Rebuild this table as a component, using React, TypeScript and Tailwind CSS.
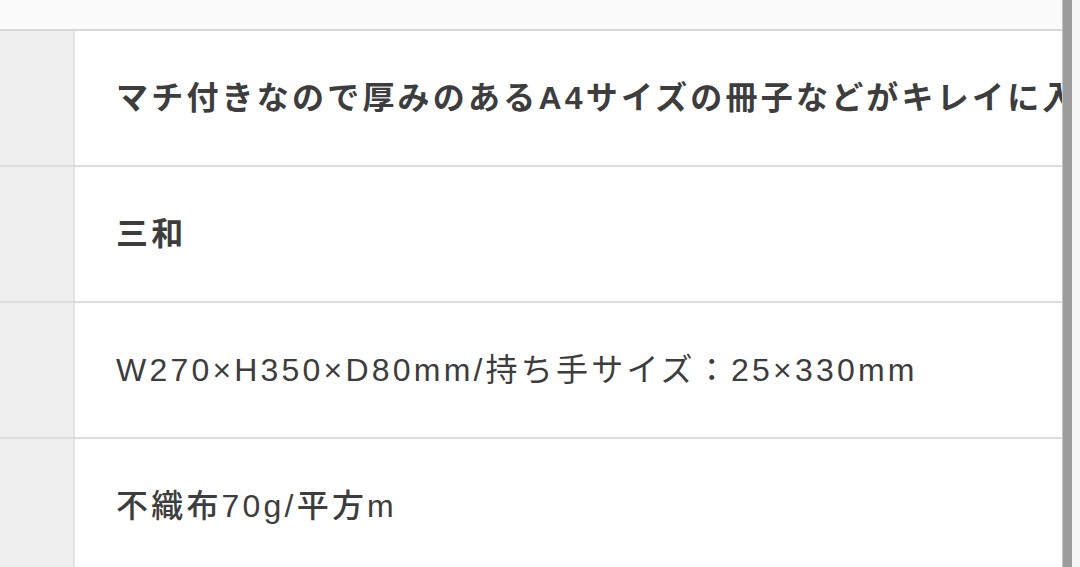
const rows = [
  {
    text: "マチ付きなので厚みのあるA4サイズの冊子などがキレイに入ります",
    weight: "font-bold",
  },
  { text: "三和", weight: "font-bold" },
  {
    text: "W270×H350×D80mm/持ち手サイズ：25×330mm",
    weight: "font-normal",
  },
  { text: "不織布70g/平方m", weight: "font-medium" },
];

export default function App() {
  return (
    <div
      className="flex h-[567px] w-[1080px] overflow-hidden bg-white"
      style={{ fontFamily: '"Liberation Sans", "Noto Sans CJK JP", sans-serif' }}
    >
      {/* Spec table */}
      <div className="flex min-w-0 flex-1 flex-col">
        <div className="h-[31px] shrink-0 border-b-2 border-[#d8d8d8] bg-[#fbfbfb]" />
        {rows.map((row, i) => (
          <div
            key={i}
            className="flex h-[136px] shrink-0 border-b-2 border-[#dddddd]"
          >
            <div className="w-[75px] shrink-0 border-r-2 border-[#e4e4e4] bg-[#efefef]" />
            <div className="flex min-w-0 flex-1 items-center overflow-hidden bg-white pl-[41px]">
              <span
                className={`whitespace-nowrap text-[32px] tracking-[0.1em] text-[#3d3d3d] ${row.weight}`}
              >
                {row.text}
              </span>
            </div>
          </div>
        ))}
      </div>

      {/* Scroll bar edge */}
      <div className="w-[10px] shrink-0 border-l border-[#c4c4c4] bg-[#9c9c9c]" />
      <div className="w-[8px] shrink-0 bg-[#f6f6f6]" />
    </div>
  );
}
